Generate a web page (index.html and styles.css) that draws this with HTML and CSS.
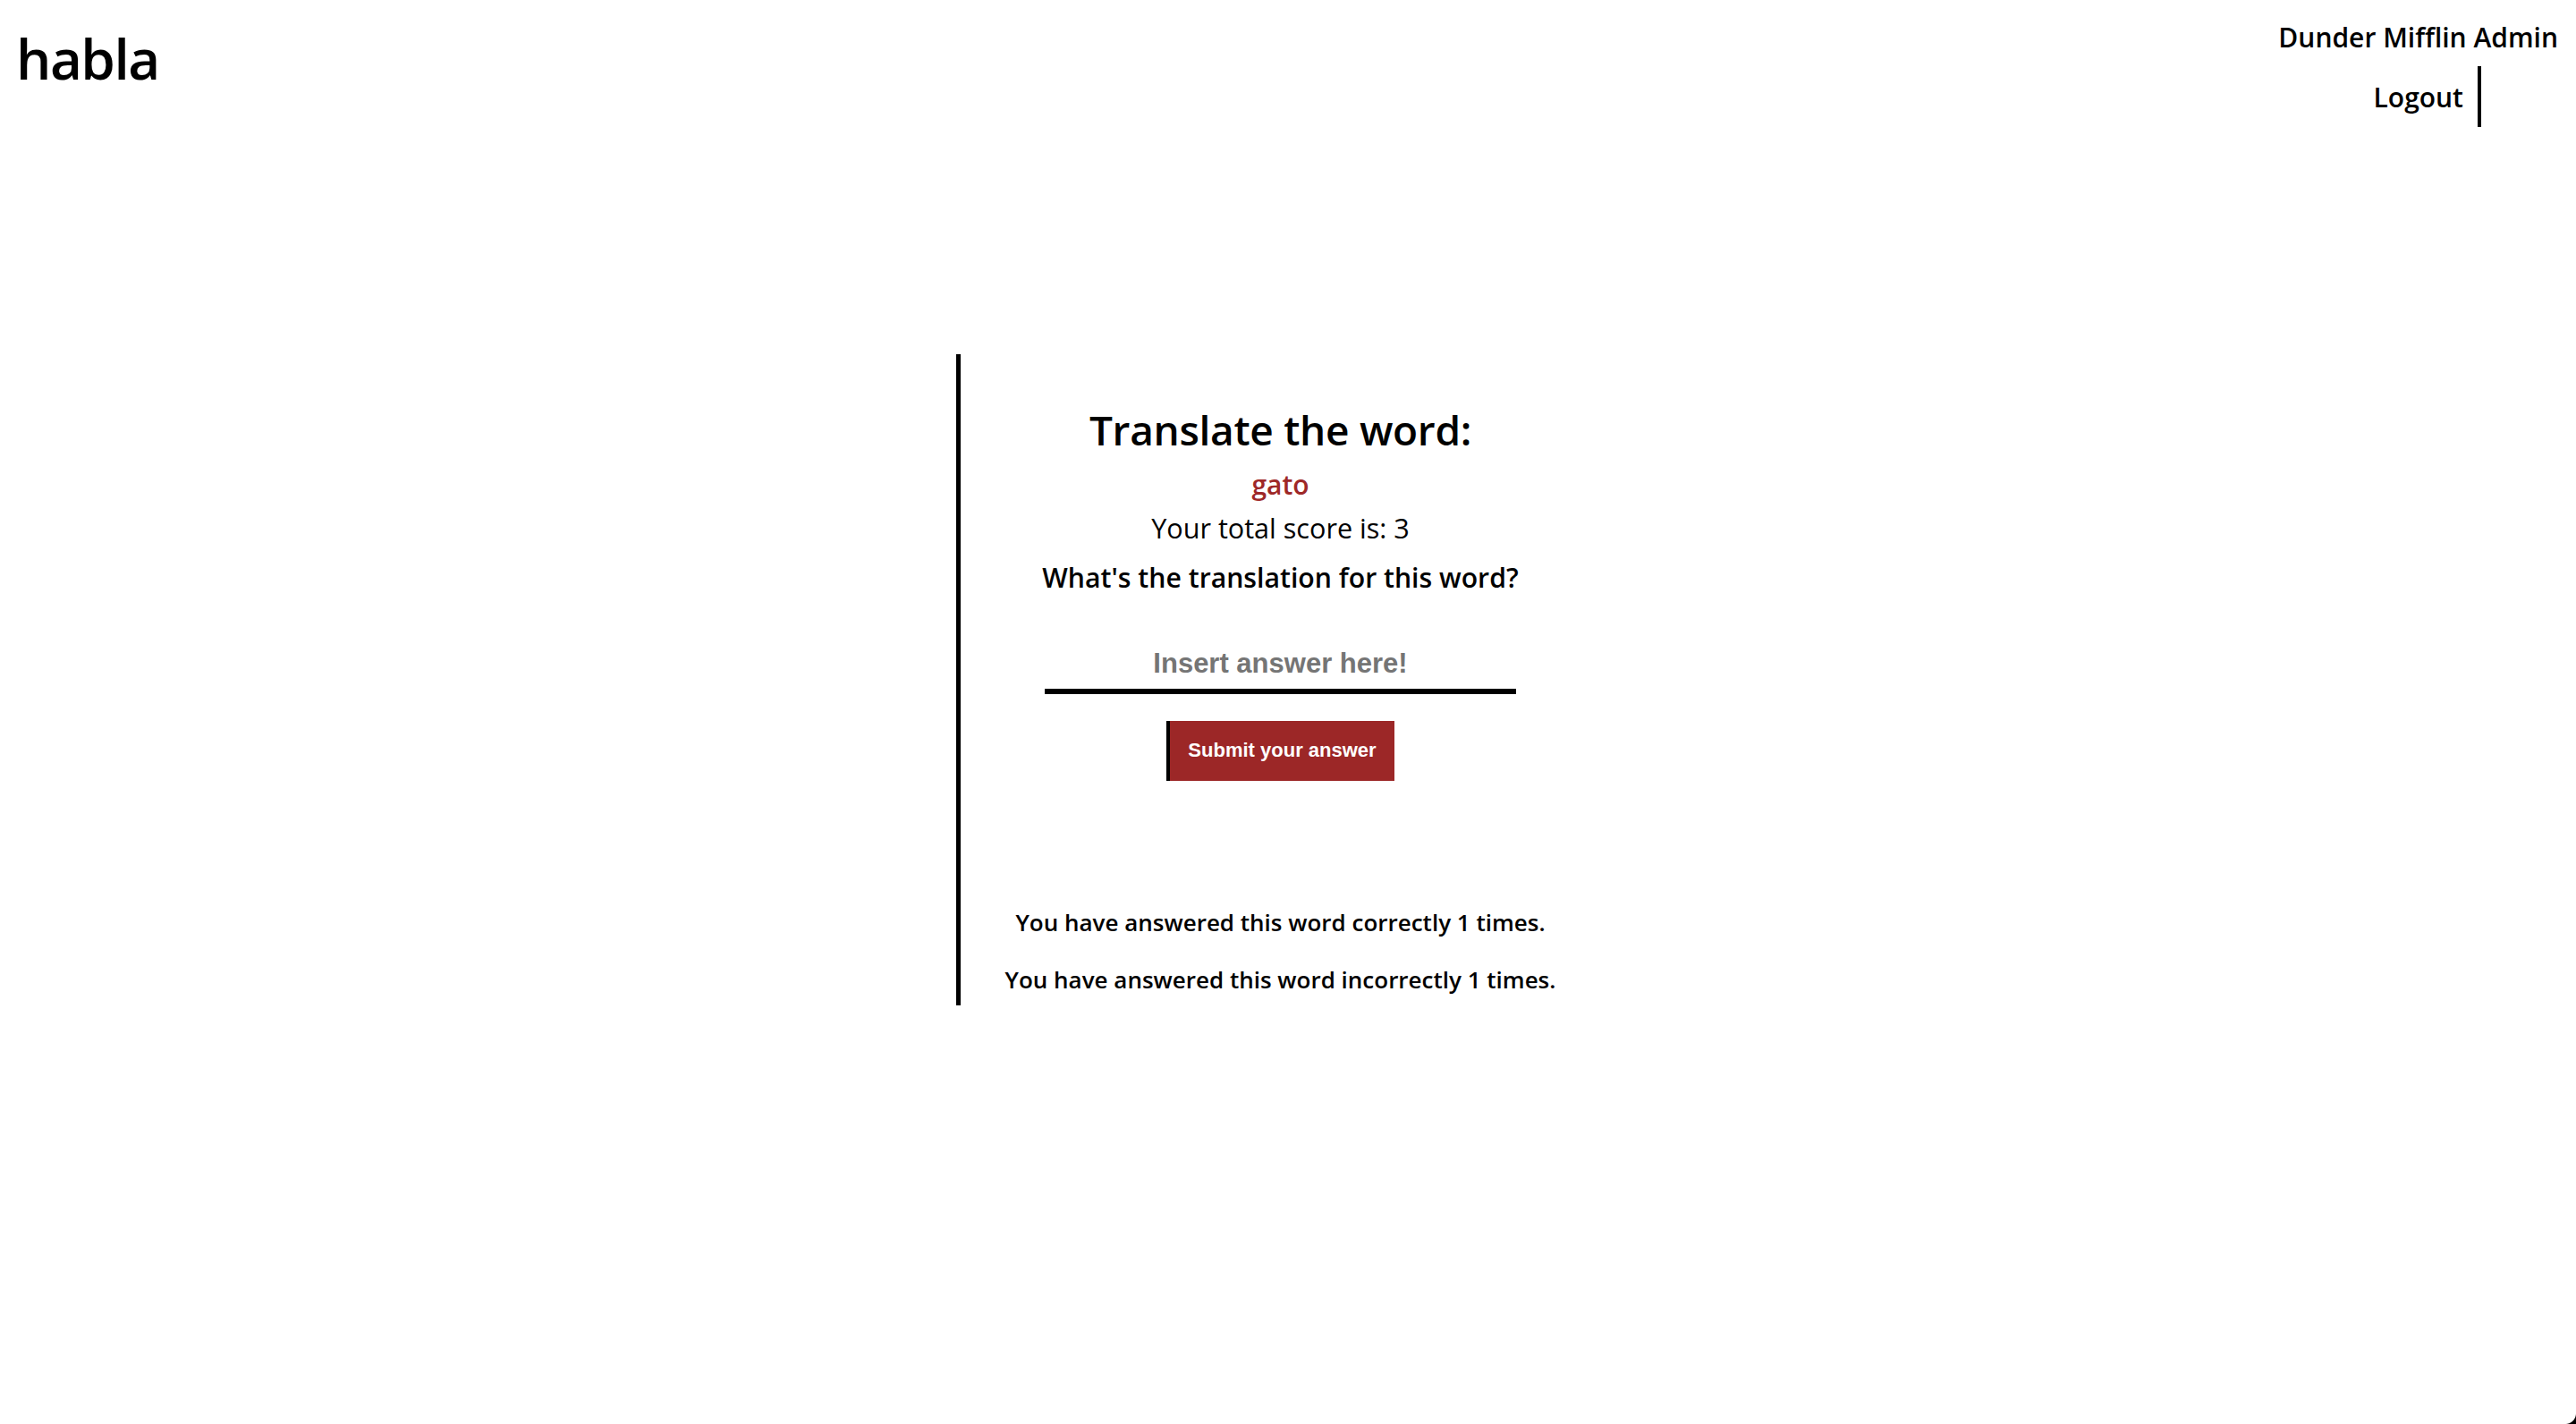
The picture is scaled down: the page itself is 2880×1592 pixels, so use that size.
FILE: index.html
```html
<!DOCTYPE html>
<html lang="en">
<head>
<meta charset="utf-8">
<title>habla</title>
<link rel="stylesheet" href="styles.css">
</head>
<body>
<header class="topbar">
  <h1 class="logo">habla</h1>
  <nav class="usernav">
    <span class="username">Dunder Mifflin Admin</span>
    <a class="logout" href="#">Logout</a>
  </nav>
</header>
<main class="main">
  <section class="card">
    <h2 class="title">Translate the word:</h2>
    <div class="word">gato</div>
    <div class="score">Your total score is: 3</div>
    <label class="question" for="answer">What's the translation for this word?</label>
    <input class="answer" id="answer" type="text" placeholder="Insert answer here!">
    <button class="submit" type="button">Submit your answer</button>
    <p class="stat stat-first">You have answered this word correctly 1 times.</p>
    <p class="stat">You have answered this word incorrectly 1 times.</p>
  </section>
</main>
<div class="corner"></div>
</body>
</html>
```

FILE: styles.css
```css
html, body {
  margin: 0;
  padding: 0;
  background: #ffffff;
}

body {
  font-family: "Open Sans", "Noto Sans", sans-serif;
  color: #000000;
  min-height: 1592px;
}

.topbar {
  display: flex;
  justify-content: space-between;
  align-items: flex-start;
  padding: 0 20px 0 18px;
}

.logo {
  margin: 32px 0 0 0;
  font-size: 62px;
  line-height: 67px;
  font-weight: 600;
  letter-spacing: -1.5px;
}

.usernav {
  display: flex;
  flex-direction: column;
  align-items: flex-end;
  padding-top: 22px;
}

.username {
  font-size: 30px;
  line-height: 40px;
  font-weight: 600;
}

.logout {
  margin-top: 12px;
  margin-right: 86px;
  padding: 15px 16px 13px 0;
  border-right: 4px solid #000000;
  font-size: 30px;
  line-height: 40px;
  font-weight: 600;
  color: #000000;
  text-decoration: none;
}

.main {
  display: flex;
  justify-content: center;
  padding-right: 22px;
  margin-top: 254px;
}

.card {
  width: 715px;
  border-left: 5px solid #000000;
  padding: 54px 0 11px 0;
  display: flex;
  flex-direction: column;
  align-items: center;
  text-align: center;
}

.title {
  margin: 0;
  font-size: 46px;
  line-height: 60px;
  font-weight: 600;
  letter-spacing: -0.3px;
}

.word {
  margin-top: 12px;
  font-size: 30px;
  line-height: 40px;
  font-weight: 600;
  color: #9e2828;
}

.score {
  margin-top: 8px;
  font-size: 30.6px;
  line-height: 40px;
  font-weight: 400;
}

.question {
  margin-top: 16px;
  font-size: 30.2px;
  line-height: 40px;
  font-weight: 600;
}

.answer {
  margin-top: 54px;
  width: 527px;
  box-sizing: border-box;
  padding: 2px 0 8px 0;
  border: none;
  border-bottom: 6px solid #000000;
  outline: none;
  background: transparent;
  font-family: "Liberation Sans", Arial, sans-serif;
  font-size: 31px;
  line-height: 40px;
  height: 56px;
  font-weight: 700;
  text-align: center;
  color: #000000;
}

.answer::placeholder {
  color: #757575;
  opacity: 1;
}

.submit {
  margin-top: 30px;
  padding: 20px 20px 21px 20px;
  border: none;
  border-left: 4px solid #000000;
  border-radius: 0;
  background: #9c2727;
  color: #ffffff;
  font-family: "Liberation Sans", Arial, sans-serif;
  font-size: 22px;
  line-height: 26px;
  font-weight: 700;
  cursor: pointer;
}

.stat {
  margin: 28px 0 0 0;
  font-size: 26px;
  line-height: 36px;
  font-weight: 600;
}

.stat-first {
  margin-top: 140px;
}

.corner {
  position: fixed;
  right: 0;
  bottom: 0;
  width: 12px;
  height: 12px;
  background: radial-gradient(circle at 0 0, transparent 11.5px, #000000 12.5px);
}
```
